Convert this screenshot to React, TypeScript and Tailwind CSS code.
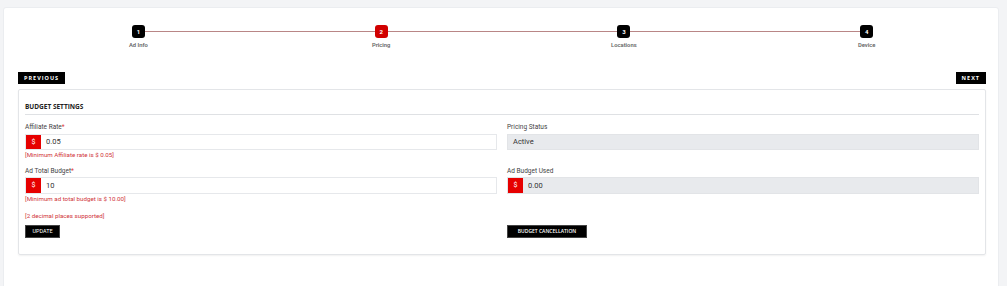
import React from "react";

const steps = [
  { n: 1, label: "Ad Info" },
  { n: 2, label: "Pricing", active: true },
  { n: 3, label: "Locations" },
  { n: 4, label: "Device" },
];

function Stepper() {
  return (
    <div className="flex">
      {steps.map((s, i) => (
        <div key={s.n} className="flex-1 flex flex-col items-center">
          <div className="w-full flex items-center">
            <div className={`flex-1 h-px ${i === 0 ? "bg-transparent" : "bg-[#b98686]"}`} />
            <div
              className={`w-[13px] h-[13px] rounded-[3px] flex items-center justify-center text-white text-[6px] font-bold ${
                s.active ? "bg-[#d10000]" : "bg-black"
              }`}
            >
              {s.n}
            </div>
            <div className={`flex-1 h-px ${i === steps.length - 1 ? "bg-transparent" : "bg-[#b98686]"}`} />
          </div>
          <div className="mt-[4px] text-[5.8px] leading-[7px] font-semibold text-[#666]">{s.label}</div>
        </div>
      ))}
    </div>
  );
}

function Dollar() {
  return (
    <div className="w-[15px] h-full bg-[#e60000] text-white text-[7px] flex items-center justify-center shrink-0">
      $
    </div>
  );
}

function Label({ text, required }: { text: string; required?: boolean }) {
  return (
    <div className="h-[8px] text-[6.5px] leading-[8px] text-[#444]">
      {text}
      {required && <span className="text-[#e04040]">*</span>}
    </div>
  );
}

function ErrorText({ text }: { text: string }) {
  return <div className="mt-[1px] text-[6.2px] leading-[8px] text-[#d0343a]">{text}</div>;
}

export default function App() {
  return (
    <div
      className="w-full h-[286px] bg-[#f3f4f6] pt-[7px] pl-[3px] pr-[8px] overflow-hidden"
      style={{ fontFamily: "Roboto, 'Liberation Sans', sans-serif" }}
    >
      <div className="h-[300px] bg-white rounded-t-[3px] border border-[#ebedf0] pt-[17px] pl-[13px] pr-[10px]">
        <Stepper />

        <div className="mt-[23px] flex justify-between pl-[1px] pr-[2px]">
          <button className="h-[12px] px-[6px] bg-black text-white text-[5.5px] font-bold tracking-[1px]" style={{ fontFamily: "'Open Sans', sans-serif" }}>
            PREVIOUS
          </button>
          <button className="h-[12px] px-[6px] bg-black text-white text-[5.5px] font-bold tracking-[1px]" style={{ fontFamily: "'Open Sans', sans-serif" }}>
            NEXT
          </button>
        </div>

        <div className="mt-[5px] ml-[1px] mr-[2px] border border-[#e3e5e8] rounded-[2px] shadow-[0_1px_2px_rgba(0,0,0,0.06)] px-[6px] pb-[16px]">
          <div className="pt-[13px] pb-[3px] border-b border-[#dfe1e4] text-[6.5px] leading-[8px] font-bold text-[#222]" style={{ fontFamily: "'Open Sans', sans-serif" }}>
            BUDGET SETTINGS
          </div>

          <div className="grid grid-cols-2 gap-x-[10px]">
            <div className="mt-[8px]">
              <Label text="Affiliate Rate" required />
              <div className="mt-[3px] h-[16px] flex border border-[#e6e8eb] bg-white">
                <Dollar />
                <div className="pl-[5px] flex items-center text-[7.5px] text-[#333]">0.05</div>
              </div>
              <ErrorText text="[Minimum Affiliate rate is $ 0.05]" />
            </div>
            <div className="mt-[8px]">
              <Label text="Pricing Status" />
              <div className="mt-[3px] h-[16px] flex items-center pl-[5px] bg-[#e8eaed] border border-[#e2e4e7] text-[7.5px] text-[#333]">
                Active
              </div>
            </div>

            <div className="mt-[8px]">
              <Label text="Ad Total Budget" required />
              <div className="mt-[2px] h-[17px] flex border border-[#e6e8eb] bg-white">
                <Dollar />
                <div className="pl-[5px] flex items-center text-[7.5px] text-[#333]">10</div>
              </div>
              <ErrorText text="[Minimum ad total budget is $ 10.00]" />
            </div>
            <div className="mt-[8px]">
              <Label text="Ad Budget Used" />
              <div className="mt-[2px] h-[17px] flex bg-[#e8eaed] border border-[#e2e4e7]">
                <Dollar />
                <div className="pl-[5px] flex items-center text-[7.5px] text-[#333]">0.00</div>
              </div>
            </div>

            <div className="mt-[9px] text-[6.2px] leading-[8px] text-[#d0343a]">[2 decimal places supported]</div>
            <div />

            <div className="mt-[5px] flex">
              <button className="block h-[13px] w-[35px] bg-black text-white text-[5.5px] border border-[#444]">UPDATE</button>
            </div>
            <div className="mt-[5px] flex">
              <button className="block h-[13px] w-[80px] bg-black text-white text-[5px] font-semibold border border-[#444]" style={{ fontFamily: "'Open Sans', sans-serif" }}>
                BUDGET CANCELLATION
              </button>
            </div>
          </div>
        </div>
      </div>
    </div>
  );
}
